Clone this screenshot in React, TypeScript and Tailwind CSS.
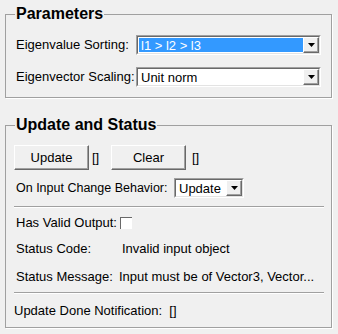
import React from 'react';

const font = { fontFamily: '"Liberation Sans", Arial, sans-serif' };

// small black down-arrow used by the combo buttons
const Arrow = () => (
  <svg width="7" height="4" viewBox="0 0 7 4">
    <polygon points="0,0 7,0 3.5,4" fill="#000" />
  </svg>
);

interface ComboProps {
  value: string;
  width: string;
  selected?: boolean;
}

const Combo: React.FC<ComboProps> = ({ value, width, selected }) => (
  <div className={`${width} h-[20px] flex border border-t-[#a0a0a0] border-l-[#a0a0a0] border-r-white border-b-white`}>
    <div className="flex-1 flex items-center bg-white border border-t-[#696969] border-l-[#696969] border-r-[#e3e3e3] border-b-[#e3e3e3]">
      {selected ? (
        <div className="flex-1 ml-[1px] h-[14px] bg-[#3399ff] text-white flex items-center pl-[2px] leading-none">
          {value}
        </div>
      ) : (
        <div className="flex-1 pl-[3px] leading-none">{value}</div>
      )}
      <div className="w-[16px] h-[16px] flex items-center justify-center bg-[#f0f0f0] border border-t-white border-l-white border-r-[#696969] border-b-[#696969] shadow-[inset_-1px_-1px_0_#a0a0a0]">
        <Arrow />
      </div>
    </div>
  </div>
);

const Button: React.FC<{ label: string }> = ({ label }) => (
  <button className="w-[75px] h-[25px] bg-[#f0f0f0] border border-t-white border-l-white border-r-[#696969] border-b-[#696969] shadow-[inset_-1px_-1px_0_#a0a0a0] text-[13px] text-black">
    {label}
  </button>
);

const Separator = () => (
  <div className="mr-[7px] h-[2px] border-t border-t-[#a0a0a0] border-b border-b-white" />
);

const App: React.FC = () => {
  return (
    <div className="w-[338px] h-[334px] bg-[#f0f0f0] pl-[5px] pr-[6px] pt-[5px] text-[13px] text-black" style={font}>
      {/* Parameters */}
      <fieldset className="border border-[#a0a0a0] shadow-[1px_1px_0_#fff] px-0 pt-[12px] pb-[10px]">
        <legend className="ml-[9px] px-[1px] text-[16px] leading-[18px] font-bold">Parameters</legend>
        <div className="px-[10px] flex flex-col gap-[12px]">
          <div className="flex items-center">
            <span className="w-[120px]">Eigenvalue Sorting:</span>
            <Combo value="l1 > l2 > l3" width="w-[185px]" selected />
          </div>
          <div className="flex items-center">
            <span className="w-[120px]">Eigenvector Scaling:</span>
            <Combo value="Unit norm" width="w-[185px]" />
          </div>
        </div>
      </fieldset>

      {/* Update and Status */}
      <fieldset className="mt-[18px] border border-[#a0a0a0] shadow-[1px_1px_0_#fff] px-0 pt-[11px] pb-[6px]">
        <legend className="ml-[9px] px-[1px] text-[16px] leading-[18px] font-bold">Update and Status</legend>
        <div className="pl-[8px]">
          <div className="flex items-center">
            <Button label="Update" />
            <span className="w-[22px] pl-[3px]">[]</span>
            <Button label="Clear" />
            <span className="pl-[6px]">[]</span>
          </div>

          <div className="flex items-center mt-[8px] ml-[2px]">
            <span className="w-[158px] text-[12.5px] whitespace-nowrap">On Input Change Behavior:</span>
            <Combo value="Update" width="w-[70px]" />
          </div>

          <div className="mt-[8px]">
            <Separator />
          </div>

          <div className="ml-[2px] mt-[5px] h-[20px] flex items-center">
            <span className="w-[104px]">Has Valid Output:</span>
            <div className="w-[12px] h-[12px] border-t border-l border-[#696969] bg-white" />
          </div>
          <div className="ml-[2px] mt-[6px] h-[20px] flex items-center">
            <span className="w-[106px]">Status Code:</span>
            <span>Invalid input object</span>
          </div>
          <div className="ml-[2px] mt-[8px] h-[20px] flex items-center">
            <span className="w-[103px]">Status Message:</span>
            <span>Input must be of Vector3, Vector...</span>
          </div>

          <div className="mt-[5px]">
            <Separator />
          </div>

          <div className="mt-[7px] h-[20px] flex items-center">
            <span>Update Done Notification:&nbsp; []</span>
          </div>
        </div>
      </fieldset>
    </div>
  );
};

export default App;
